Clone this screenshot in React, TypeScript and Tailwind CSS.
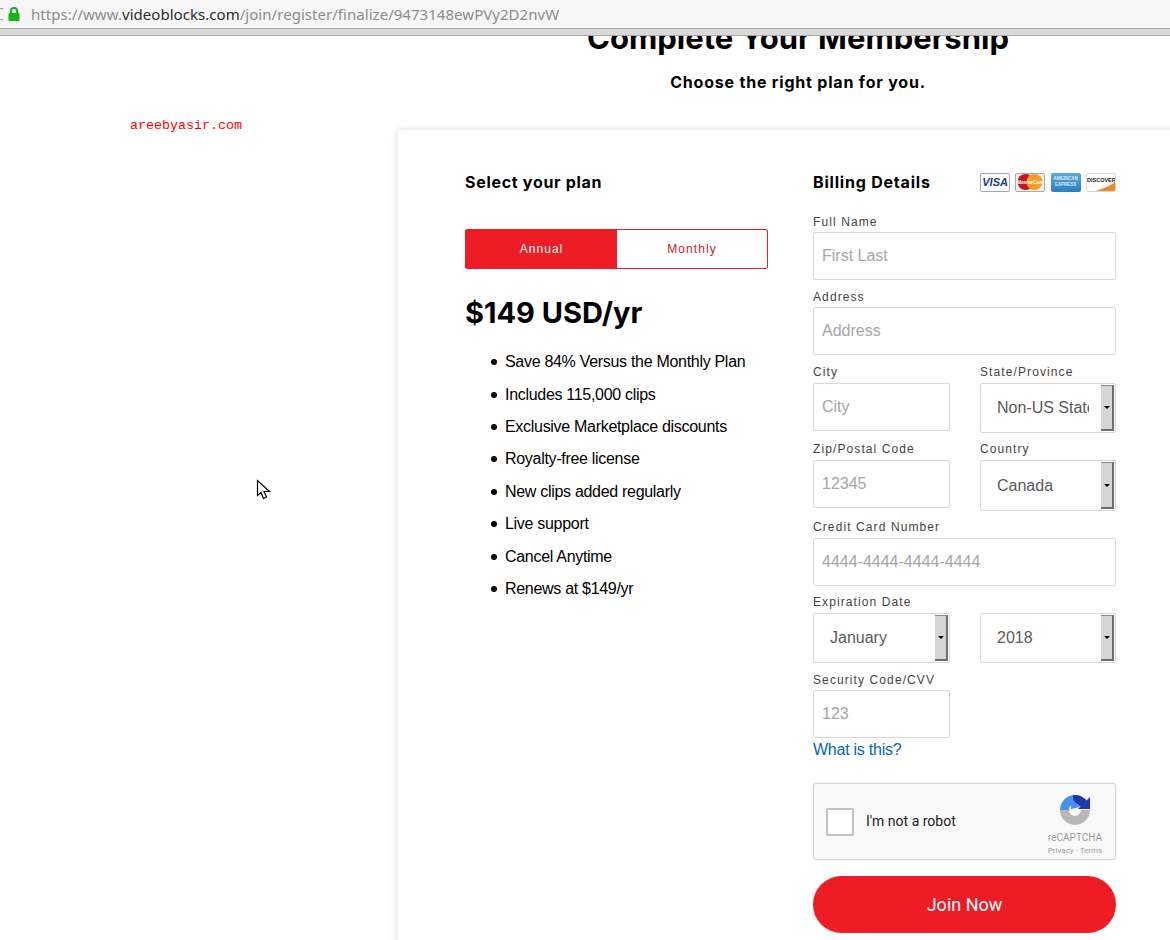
import React from 'react';

const bodyFont = 'font-["Liberation_Sans",Arial,sans-serif]';
const headFont = 'font-["Inter",sans-serif]';

const planFeatures = [
  'Save 84% Versus the Monthly Plan',
  'Includes 115,000 clips',
  'Exclusive Marketplace discounts',
  'Royalty-free license',
  'New clips added regularly',
  'Live support',
  'Cancel Anytime',
  'Renews at $149/yr',
];

const Label = ({ children }: { children: React.ReactNode }) => (
  <div className="h-[15px] text-[12px] leading-[15px] tracking-[1.1px] text-[#444]">{children}</div>
);

const TextBox = ({ placeholder, className = '' }: { placeholder: string; className?: string }) => (
  <input
    readOnly
    placeholder={placeholder}
    className={`block h-[48px] rounded-[2px] border border-[#d9d9d9] bg-white px-2 text-[16px] text-[#555] placeholder:text-[#a6a6a6] outline-none ${className}`}
  />
);

const SelectBox = ({ value, h = 'h-[50px]' }: { value: string; h?: string }) => (
  <div className={`flex w-full items-stretch rounded-[2px] border border-[#d9d9d9] bg-white py-px pl-4 pr-px ${h}`}>
    <div className="mr-3 min-w-0 flex-1 self-center overflow-hidden whitespace-nowrap text-[16px] text-[#5a5a5a]">{value}</div>
    <div className="flex w-[13px] items-center justify-center border-r-2 border-b-2 border-t border-[#6e6e6e] border-t-[#8a8a8a] bg-[#d6d6d6]">
      <div className="h-0 w-0 border-x-[3px] border-t-[3px] border-x-transparent border-t-black" />
    </div>
  </div>
);

const CardLogos = () => (
  <div className="flex gap-[5.3px]">
    <div className="flex h-[19px] w-[30px] items-center justify-center rounded-[2px] border border-[#9aa6c4] bg-white text-[11px] font-bold italic leading-none text-[#1b3a82]">
      VISA
    </div>
    <div className="relative flex h-[19px] w-[30px] items-center justify-center overflow-hidden rounded-[2px] border border-[#a9a9a9] bg-[#f3f3f3]">
      <svg width="26" height="16" viewBox="0 0 26 16" className="absolute">
        <circle cx="8.5" cy="8" r="8" fill="#c8161d" />
        <circle cx="17.5" cy="8" r="8" fill="#f5a024" />
      </svg>
      <span className="relative text-[5px] font-bold italic leading-none text-white">MasterCard</span>
    </div>
    <div className="flex h-[19px] w-[30px] flex-col items-center justify-center rounded-[2px] bg-gradient-to-b from-[#5fa8dc] to-[#2c7fbe] text-[4.5px] font-bold leading-[6px] text-[#dcecf8]">
      <span>AMERICAN</span>
      <span>EXPRESS</span>
    </div>
    <div className="relative h-[19px] w-[30px] overflow-hidden rounded-[2px] border border-[#d8d8d8] bg-white">
      <div className="pt-[4px] text-center text-[5.5px] font-bold leading-none text-[#222]">DISCOVER</div>
      <svg width="28" height="17" viewBox="0 0 28 17" className="absolute left-0 top-0">
        <path d="M8 17 C16 15 24 11 28 8 L28 17 Z" fill="#ee8a2c" />
      </svg>
    </div>
  </div>
);

const RecaptchaLogo = () => (
  <svg width="30" height="30" viewBox="0 0 30 30">
    <path d="M25.5 15 A10.5 10.5 0 0 1 4.5 15" fill="none" stroke="#b8b8b8" strokeWidth="9" />
    <polygon points="0,17 9,17 9,26 6,24" fill="#b8b8b8" />
    <path d="M13 4.7 A10.5 10.5 0 0 1 24 9.5" fill="none" stroke="#1c3aa9" strokeWidth="9" />
    <polygon points="30,2 30,14 18,14" fill="#1c3aa9" />
    <path d="M4.5 15 A10.5 10.5 0 0 1 13 4.7" fill="none" stroke="#4a90f0" strokeWidth="9" />
    <polygon points="11,3 20,12 11,14" fill="#4a90f0" />
  </svg>
);

export default function App() {
  return (
    <div className={`relative flex h-[940px] w-[1170px] flex-col overflow-hidden bg-white ${bodyFont}`}>
      {/* browser address bar */}
      <div className="flex h-[28px] shrink-0 items-center bg-[#f6f6f6] font-['Noto_Sans',sans-serif] text-[15px] tracking-[0.04px]">
        <svg width="3" height="12" viewBox="0 0 3 12" className="mr-[5px]">
          <path d="M0 0 A6 6 0 0 1 0 12" fill="none" stroke="#777" strokeWidth="1" />
        </svg>
        <svg width="12" height="14" viewBox="0 0 12 14" className="mr-[11px]">
          <path d="M3 6 V4 A3 3 0 0 1 9 4 V6" fill="none" stroke="#14b514" strokeWidth="2" />
          <rect x="0.5" y="6" width="11" height="8" rx="1" fill="#14b514" />
        </svg>
        <span className="whitespace-nowrap text-[#8c8c8c]">
          https://www.<span className="text-[#2b2b2b]">videoblocks.com</span>/join/register/finalize/9473148ewPVy2D2nvW
        </span>
      </div>
      <div className="h-[8px] shrink-0 border-y border-y-[#a8a8a8] bg-[#d9d9d9]" />

      {/* page */}
      <div className="min-h-0 flex-1 overflow-hidden">
        <div className={`ml-[398px] mt-[-16px] w-[800px] text-center ${headFont}`}>
          <h1 className="h-[36px] text-[31px] font-bold leading-[36px] text-black">Complete Your Membership</h1>
          <p className="mt-[14px] h-[24px] text-[16px] font-bold leading-[24px] tracking-[0.8px] text-black">Choose the right plan for you.</p>
        </div>

        <div className="ml-[398px] mt-[36px] flex w-[800px] gap-[45px] bg-white pl-[67px] pt-[40px] shadow-[0_0_8px_rgba(0,0,0,0.14)]">
          {/* plan column */}
          <div className="w-[303px]">
            <h2 className={`h-[24px] text-[16px] font-bold leading-[24px] tracking-[0.7px] text-black ${headFont}`}>Select your plan</h2>
            <div className="mt-[35px] flex h-[40px] rounded-[2px] border border-[#ee1c25] text-[12px] tracking-[1.05px]">
              <div className="flex w-[151px] items-center justify-center bg-[#ee1c25] text-white">Annual</div>
              <div className="flex flex-1 items-center justify-center text-[#c9232c]">Monthly</div>
            </div>
            <div className={`mt-[24px] h-[40px] text-[29px] font-bold leading-[40px] text-black ${headFont}`}>$149 USD/yr</div>
            <ul className="mt-[13px] pl-[26px]">
              {planFeatures.map((feature) => (
                <li key={feature} className="flex h-[32.4px] items-center text-[16px] tracking-[-0.3px] text-black">
                  <span className="mr-[8px] h-[6px] w-[6px] rounded-full bg-black" />
                  {feature}
                </li>
              ))}
            </ul>
          </div>

          {/* billing column */}
          <div className="w-[303px]">
            <div className="flex h-[24px] items-center justify-between">
              <h2 className={`text-[16px] font-bold leading-[24px] tracking-[0.8px] text-black ${headFont}`}>Billing Details</h2>
              <CardLogos />
            </div>

            <div className="mt-[21px]"><Label>Full Name</Label></div>
            <TextBox placeholder="First Last" className="mt-[2px] w-full" />

            <div className="mt-[10px]"><Label>Address</Label></div>
            <TextBox placeholder="Address" className="mt-[2px] w-full" />

            <div className="mt-[10px] flex justify-between">
              <div className="w-[137px]">
                <Label>City</Label>
                <TextBox placeholder="City" className="mt-[3px] w-full" />
              </div>
              <div className="w-[136px]">
                <Label>State/Province</Label>
                <div className="mt-[3px]"><SelectBox value="Non-US States" /></div>
              </div>
            </div>

            <div className="mt-[9px] flex justify-between">
              <div className="w-[137px]">
                <Label>Zip/Postal Code</Label>
                <TextBox placeholder="12345" className="mt-[3px] w-full" />
              </div>
              <div className="w-[136px]">
                <Label>Country</Label>
                <div className="mt-[3px]"><SelectBox value="Canada" h="h-[51px]" /></div>
              </div>
            </div>

            <div className="mt-[9px]"><Label>Credit Card Number</Label></div>
            <TextBox placeholder="4444-4444-4444-4444" className="mt-[3px] w-full" />

            <div className="mt-[9px]"><Label>Expiration Date</Label></div>
            <div className="mt-[3px] flex justify-between">
              <div className="w-[137px]"><SelectBox value="January" /></div>
              <div className="w-[136px]"><SelectBox value="2018" /></div>
            </div>

            <div className="mt-[10px]"><Label>Security Code/CVV</Label></div>
            <TextBox placeholder="123" className="mt-[2px] w-[137px]" />
            <div className="mt-[2px] h-[20px] text-[16px] leading-[20px] tracking-[-0.25px] text-[#0a64b4]">What is this?</div>

            <div className="mt-[23px] flex h-[77px] items-center rounded-[3px] border border-[#d3d3d3] bg-[#f9f9f9] pl-[12px] pr-[12px] shadow-[0_0_3px_rgba(0,0,0,0.08)]">
              <div className="h-[28px] w-[28px] rounded-[2px] border-2 border-[#c1c1c1] bg-white" />
              <span className="ml-[12px] font-['Roboto',sans-serif] text-[14px] text-[#222]">I'm not a robot</span>
              <div className="ml-auto mt-[8px] flex w-[56px] flex-col items-center font-['Roboto',sans-serif] text-[#9b9b9b]">
                <RecaptchaLogo />
                <div className="mt-[7px] text-[10px] leading-[12px]">reCAPTCHA</div>
                <div className="mt-px whitespace-nowrap text-[8px] leading-[12px]">Privacy - Terms</div>
              </div>
            </div>

            <div className="mt-[16px] flex h-[57px] items-center justify-center rounded-full bg-[#ee1c25] font-['Roboto',sans-serif] text-[18px] text-white">
              Join Now
            </div>
            <div className="h-[60px]" />
          </div>
        </div>
      </div>

      {/* watermark and pointer lie over the page */}
      <div className="absolute left-[130px] top-[117px] font-['Liberation_Mono',monospace] text-[13.33px] leading-[17px] text-[#f00]">areebyasir.com</div>
      <svg width="16" height="22" viewBox="0 0 16 22" className="absolute left-[256px] top-[479px]">
        <path d="M1.5 1.5 V16.5 L5 13.5 L7.5 19.5 L10.5 18 L8 12.5 L13.5 12.5 Z" fill="#fff" stroke="#000" strokeWidth="1.2" strokeLinejoin="miter" />
      </svg>
    </div>
  );
}
